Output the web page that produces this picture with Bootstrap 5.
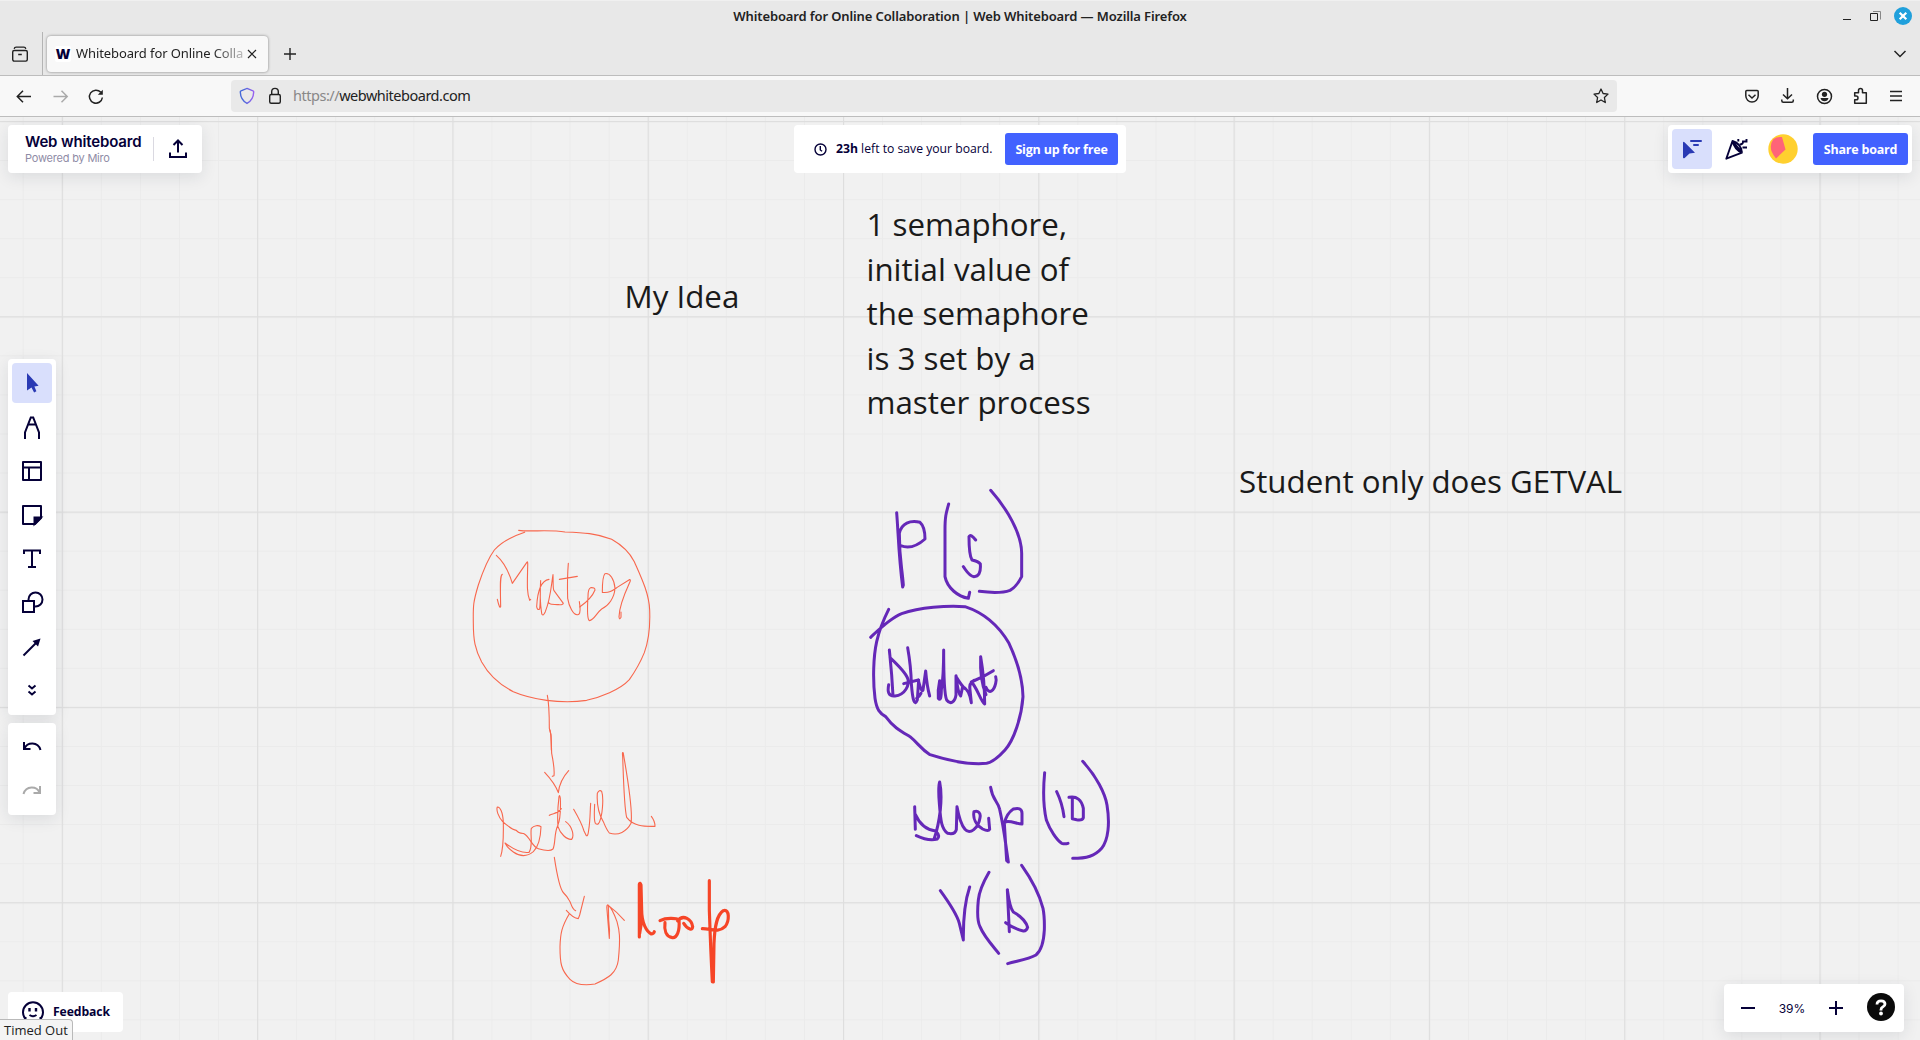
<!DOCTYPE html>
<html lang="en">
<head>
<meta charset="utf-8">
<title>Whiteboard for Online Collaboration | Web Whiteboard</title>
<link href="https://cdn.jsdelivr.net/npm/bootstrap@5.3.0/dist/css/bootstrap.min.css" rel="stylesheet">
<style>
body{width:1920px;height:1040px;overflow:hidden;background:#f1f1f1;font-family:"Open Sans","Noto Sans",sans-serif;color:#222}
svg{display:block;flex:none}
.ico{fill:none;stroke:currentColor}
.titlebar{height:32px;background:#e8e8e8;border-top:1px solid #f0f0f0}
.win-title{font-family:"Noto Sans",sans-serif;font-size:13px;font-weight:600;color:#222;white-space:nowrap;letter-spacing:-.12px}
.win-btns{right:7px;top:6px}
.tabstrip{height:44px;background:#e8e8e8;border-bottom:1px solid #bdbdbd}
.tabview{width:43px;height:43px;border-right:1px solid #b4b4b4;padding-left:12px}
.browser-tab{width:221px;height:36px;margin-left:4px;margin-top:1px;background:#f8f8f8;border-radius:4px;box-shadow:0 0 3px rgba(0,0,0,.45);padding-left:8px}
.favicon{width:16px;height:16px;background:#fff;border-radius:2px;color:#050038;font-weight:800;font-size:14px;line-height:16px}
.tab-title{font-family:"Noto Sans",sans-serif;width:170px;margin-left:5px;margin-right:1px;font-size:13px;letter-spacing:-.1px;white-space:nowrap;-webkit-mask-image:linear-gradient(90deg,#000 80%,rgba(0,0,0,.2));mask-image:linear-gradient(90deg,#000 80%,rgba(0,0,0,.2))}
.toolbar{height:41px;background:#f8f8f8;border-bottom:1px solid #bdbdbd}
.urlbar{width:1386px;height:32px;background:#e9e9e9;border-radius:4px;font-family:"Noto Sans",sans-serif;font-size:14.5px;letter-spacing:-.48px}
.board{height:923px;overflow:hidden}
.panel{background:#fff;border-radius:4px;box-shadow:0 4px 16px rgba(34,36,60,.1);color:#050038;z-index:2}
.tool{width:40px;height:40px;border-radius:4px}
.tool-on{background:#d9dffc;color:#2a3ab4}
.btn-miro{background:#4262ff;color:#fff;height:32px;border-radius:3px;font-size:12.5px;font-weight:700;padding:0;line-height:33px;border:0;letter-spacing:-.2px}
.p-brand{left:8px;top:8px;width:194px;height:48px}
.brand-name{font:600 15px/18px "Inter",sans-serif;letter-spacing:-.15px}
.brand-sub{font:400 11px/14px "Inter",sans-serif;color:#8f8ca6;letter-spacing:-.3px}
.brand-sub{letter-spacing:-.2px}
.p-save{left:794px;top:8px;width:332px;height:48px;font-size:12.2px;box-shadow:none}
.p-share{left:1668px;top:8px;width:244px;height:48px}
.p-share .btn-miro{letter-spacing:-.2px}
.p-tools{left:8px;top:242px;width:48px;height:356px;padding-top:4px;gap:4px}
.p-undo{left:8px;top:606px;width:48px;height:92px;padding:4px;gap:4px}
.p-feed{left:8px;top:875px;width:115px;height:40px;font-size:12.2px;font-weight:700;box-shadow:none;letter-spacing:-.1px}
.p-zoom{left:1724px;top:867px;width:180px;height:48px}
.zoomval{font:400 12px "Inter",sans-serif;width:60px}
.statustip{left:0;bottom:0;width:73px;height:21px;background:#f4f4f4;border:1px solid #b9b9b9;border-left:0;border-bottom:0;border-top-right-radius:4px;font-size:13px;line-height:20px;padding-left:4px;z-index:3;white-space:nowrap}
.note{font-family:"Open Sans","Noto Sans",sans-serif;font-size:31.3px;line-height:44.5px;color:#1a1a1a;white-space:nowrap}
.n1{left:624.500px;top:157px}.n2{left:866.500px;top:85px}.n3{left:1239px;top:342px}
</style>
<script src="https://cdn.jsdelivr.net/npm/bootstrap@5.3.0/dist/js/bootstrap.bundle.min.js"></script>
</head>
<body>
<header>
 <div class="titlebar position-relative d-flex justify-content-center align-items-center">
  <span class="win-title">Whiteboard for Online Collaboration | Web Whiteboard — Mozilla Firefox</span>
  <div class="win-btns position-absolute">
   <svg class="ico" width="72" height="20" stroke="#222"><path d="M2 12.500h8" /><path d="M32 4.500h7.500v8" stroke="#888"/><path d="M29.500 6.500h7v7h-7z"/><circle cx="62" cy="9" r="9" fill="#20a0dc" stroke="none"/><path d="M58.700 5.700l6.600 6.600m0-6.600l-6.600 6.600" stroke="#fff" stroke-width="2.200"/></svg>
  </div>
 </div>
 <div class="tabstrip d-flex align-items-center">
  <div class="tabview d-flex align-items-center">
   <svg class="ico" width="16" height="16" stroke-width="1.400"><rect x=".7" y="4.500" width="14.600" height="10.600" rx="1.500"/><path d="M2.200 2.800q.3-1.700 2-1.700h7.600q1.700 0 2 1.700M6.200 8.500h3.600"/></svg>
  </div>
  <div class="browser-tab d-flex align-items-center">
   <span class="favicon text-center">W</span>
   <span class="tab-title">Whiteboard for Online Colla</span>
   <svg class="ico" width="10" height="10" stroke-width="1.200"><path d="M1 1l8 8M9 1L1 9"/></svg>
  </div>
  <svg class="ico" style="margin-left:15.500px" width="12" height="12" stroke-width="1.400"><path d="M6 0v12M0 6h12"/></svg>
  <svg class="ico ms-auto" style="margin-right:13px" width="14" height="10" stroke-width="1.500"><path d="M1.500 2L7 7.500 12.500 2"/></svg>
 </div>
 <div class="toolbar d-flex align-items-center">
  <svg class="ico" width="231" height="40" stroke-width="1.500"><path d="M31 20.500H17.500M23 14.800l-5.700 5.700 5.700 5.700"/><path d="M53.500 20.500H67M61.500 14.800l5.700 5.700-5.700 5.700" stroke="#aaa"/><path d="M100.800 16.300a6.500 6.500 0 1 0 1.600 5.200"/><path d="M102.800 13.700v5h-5z" fill="#222" stroke="none"/></svg>
  <div class="urlbar d-flex align-items-center">
   <svg class="ico ms-2" width="54" height="20" stroke-width="1.400"><defs><linearGradient id="sh"><stop offset=".2" stop-color="#4468d8"/><stop offset="1" stop-color="#9860f0"/></linearGradient></defs><path stroke="url(#sh)" d="M8 2.400l6 2.400q.8.3.7 1.200C14.500 11.500 12.500 15 8 17.400 3.500 15 1.500 11.500 1.300 6q-.1-.9.700-1.200z"/><rect x="30.700" y="8.500" width="10.600" height="8.800" rx="1.500"/><path d="M32.700 8.500V5.700a3.300 3.300 0 0 1 6.600 0v2.800"/></svg>
   <span><span style="color:#888">https://</span>webwhiteboard.com</span>
   <svg class="ico ms-auto me-2" width="16" height="16" stroke-width="1.300"><path stroke-linejoin="round" d="M8 1l2.100 4.500 4.900.6-3.600 3.400.9 5L8 12l-4.300 2.500.9-5L1 6.100l4.900-.6z"/></svg>
  </div>
  <svg class="ico" width="303" height="40" stroke-width="1.500"><g transform="translate(-1617,-76)"><path d="M1745.800 91.500q0-1 1-1h10.400q1 0 1 1v4.300a6.200 6.200 0 0 1-12.400 0z"/><path d="M1748.500 94.800l3.500 3.200 3.500-3.200"/><path d="M1787.500 88v10.500M1783 94.500l4.500 4.300 4.500-4.300M1781.800 99.500v1.200q0 1.500 1.500 1.500h8.500q1.500 0 1.500-1.500v-1.200"/><circle cx="1824.500" cy="96.500" r="7"/><circle cx="1824.500" cy="94.300" r="2.600" fill="#222" stroke="none"/><path d="M1820.500 98h8q-.8 3.200-4 3.200t-4-3.200z" fill="#222" stroke="none"/><path stroke-linejoin="round" d="M1854.700 92.800h3.800v-2.300a2 2 0 0 1 4 0v2.300h3.800v10.500h-11.600v-3.600h1.500a1.800 1.800 0 0 0 0-3.600h-1.500z"/><path d="M1890 91.500h12M1890 96h12M1890 100.500h12"/></g></svg>
 </div>
</header>
<main class="board position-relative">
 <svg class="position-absolute top-0 start-0" width="1920" height="923" viewBox="0 117 1920 923">
  <defs>
   <pattern id="minor" x="61.800" y="121" width="39.060" height="39.060" patternUnits="userSpaceOnUse"><path d="M.5 0V39.060M0 .5H39.060" stroke="#ebebeb" stroke-width="1"/></pattern>
   <pattern id="major" x="61.800" y="121" width="195.300" height="195.300" patternUnits="userSpaceOnUse"><path d="M.6 0V195.300M0 .6H195.300" stroke="#dedede" stroke-width="1.200"/></pattern>
  </defs>
  <rect y="117" width="1920" height="923" fill="url(#minor)"/>
  <rect y="117" width="1920" height="923" fill="url(#major)"/>
  <g fill="none" stroke-linecap="round" stroke-linejoin="round">
   <g stroke="#f8674d" stroke-width="3.300">
    <g transform="translate(450 510) scale(.33333)">
     <path d="M206 61C240 66 300 58 345 66C400 68 440 70 485 88C515 105 540 130 553 155C575 205 597 250 599 300C601 350 597 390 583 428C570 460 555 485 538 509C510 540 450 562 410 571C370 577 320 575 290 571C250 565 220 558 190 545C150 525 115 492 95 456C75 418 70 390 70 340C69 285 70 275 85 225C100 180 113 147 133 120C155 95 185 80 224 67"/>
     <path d="M157 193C149 197 151 230 152 290Q149 298 142 268M139 136C155 150 175 180 187 220L230 158Q234 150 233 170C232 220 230 250 239 271L242 268"/>
     <path d="M297 208C272 212 262 250 260 290Q262 302 269 297C272 275 270 240 272 212C270 240 272 290 275 310Q278 322 286 305C302 265 303 230 309 194C310 215 308 235 312 242L340 280Q340 285 325 284C305 283 295 283 295 275M355 160C352 195 352 230 353 265C357 290 370 315 382 314Q392 316 390 290L388 275M328 208L382 199"/>
     <path d="M389 291C405 280 425 265 435 240Q435 232 422 233Q414 235 414 260C412 290 410 325 418 332C433 330 438 310 455 297C475 288 493 265 495 235C493 208 480 188 465 191C457 198 457 220 457 247C480 250 490 240 505 230L538 209Q544 208 538 220C522 255 508 290 507 320Q508 332 513 322V306"/>
     <path d="M292 556C297 580 298 620 298 655L303 675L304 720"/>
    </g>
    <g transform="translate(480 730) scale(.33333)">
     <path d="M210 0C215 20 214 50 215 70C220 95 224 120 222 137L217 139M194 127C210 144 225 160 235 188C237 170 245 145 266 122"/>
     <path d="M62 379C72 350 70 310 70 275C68 245 60 230 52 231C48 240 55 260 68 275C85 290 100 300 109 301C115 310 125 310 132 311C150 320 155 350 175 356C195 362 210 365 219 357C227 340 222 310 233 287C243 265 242 230 241 205Q239 192 237 200C234 225 232 265 234 290C240 310 260 330 275 328C283 318 278 290 257 275M208 256C220 248 230 255 244 236"/>
     <path d="M75 339C100 358 125 370 147 367C160 350 150 310 154 295C162 286 175 285 183 290C182 320 175 350 160 365C142 380 120 380 100 366C87 357 80 350 75 339M281 238C295 262 305 280 312 303L319 317Q324 320 326 300C331 270 330 245 332 220M344 223C343 245 341 270 346 280Q356 290 362 265C368 245 371 200 365 184Q358 178 352 190C350 220 355 250 370 275Q380 300 388 309C415 318 440 305 453 280C460 240 440 130 430 70Q426 62 428 80C430 130 432 230 440 262C460 288 490 290 525 289Q525 273 514 259"/>
     <path d="M223 382Q237 475 251 489Q262 500 267 510C275 520 273 535 287 542M259 541Q280 565 295 566L299 555L313 499M268 551C245 590 241 610 240 650C240 700 243 720 270 748C290 768 325 765 345 762C385 744 410 730 415 690C422 620 418 600 411 575Q397 535 384 525Q379 523 381 540L388 625Q390 600 386 570L385 526Q410 545 433 571"/>
    </g>
   </g>
   <g transform="translate(480 730) scale(.33333)" stroke="#f64527" stroke-width="9.500">
    <path d="M478 621V463Q480 456 483 465L485 540C485 580 500 605 514 612Q521 612 523 605M486 560Q483 590 479 610M540 572C560 562 590 565 597 570C600 605 590 625 577 623C558 620 552 600 555 578M593 573C610 550 635 570 638 590Q637 600 630 597Q618 593 611 580M688 452V540Q692 660 697 755L700 756L702 640C704 590 710 555 730 542C750 535 748 575 735 590C715 610 690 595 667 596"/>
   </g>
   <g stroke="#6528b8" stroke-width="9">
    <g transform="translate(850 480) scale(.33333)">
     <path d="M140 98C145 160 146 230 158 321L160 315C156 260 148 240 148 160C155 130 180 120 210 127Q225 140 225 177C205 195 180 208 152 197M296 72C288 100 285 110 285 150V290C292 325 325 350 355 355L359 337M422 31C470 85 515 160 515 220V290Q500 320 480 331Q450 342 388 334M377 180Q362 160 357 170C357 200 360 230 366 240Q385 244 391 252C393 280 385 290 372 290C355 287 348 270 340 260"/>
     <path d="M62 472C80 455 120 415 155 401C210 382 290 376 345 380C400 398 445 435 477 490C505 550 518 605 519 650C515 710 492 780 465 810C445 832 425 847 410 850C360 855 290 840 240 824C210 805 205 790 180 770C155 755 130 742 107 710C90 700 80 690 75 655C68 600 70 530 80 485C90 440 105 410 116 388"/>
     <path d="M118 510C121 540 125 570 129 647M120 533Q165 575 173 595C180 615 165 645 135 648C115 650 112 635 116 614M173 503Q183 560 184 610Q190 690 202 660L206 600M161 611L205 600Q215 640 219 630L227 573Q231 620 239 648M213 640Q208 650 200 655M269 602Q263 630 265 655Q274 667 274 630Q281 590 281 510Q281 640 290 660C302 676 315 665 318 645V587Q324 640 332 648L338 620Q358 628 364 668L360 630Q356 610 372 601M318 590Q336 619 345 626M364 606C380 620 393 665 404 672Q404 600 392 530Q389 600 408 644M364 606Q402 590 430 572M437 590Q440 600 437 610C432 632 418 645 408 622"/>
    </g>
    <g transform="translate(890 750) scale(.33333)">
     <path d="M74 170L76 238M76 193C90 225 115 240 137 243Q152 258 142 267C125 272 100 267 79 257M133 265Q145 230 151 180C155 140 153 115 149 96Q144 110 148 160C152 215 155 237 173 250Q195 255 199 239L201 170Q210 220 225 238C240 255 265 235 270 203C273 190 265 180 252 185M252 185C248 205 258 225 278 237Q295 245 299 238L296 205M302 112C307 150 325 155 329 178C342 235 345 270 355 336L350 332L343 220Q350 190 370 177C385 173 396 175 396 190V222C380 222 360 210 345 216"/>
     <path d="M464 68C458 130 460 170 469 210C480 240 500 270 515 280Q525 283 534 280M578 34C620 80 645 130 651 165C660 220 655 270 635 295C615 318 590 325 548 325M500 125Q517 160 522 200M537 142C560 137 575 150 580 175V203Q577 212 560 209L547 206V146"/>
     <path d="M151 422C175 455 200 490 208 520L220 570Q219 470 239 411M297 367C275 405 267 430 265 450C260 500 265 520 270 530C282 560 310 590 326 610M395 346C430 395 450 440 459 475Q464 500 463 540C461 580 450 605 438 615C415 628 385 632 353 641M358 545L352 419Q360 475 370 486C395 500 408 515 413 532Q409 544 400 543Q375 538 347 518"/>
    </g>
   </g>
  </g>
 </svg>
 <div class="note n1 position-absolute">My Idea</div>
 <div class="note n2 position-absolute">1 semaphore,<br>initial value of<br>the semaphore<br>is 3 set by a<br>master process</div>
 <div class="note n3 position-absolute">Student only does GETVAL</div>

 <div class="panel p-brand position-absolute d-flex align-items-center">
  <div style="width:128px;margin-left:17px"><div class="brand-name">Web whiteboard</div><div class="brand-sub">Powered by Miro</div></div>
  <div class="vr" style="height:24px;align-self:center;opacity:.15"></div>
  <svg class="ico" style="margin-left:15px" width="18" height="20" stroke-width="2"><path d="M1 13.500V18h16v-4.500M9 13.500V2M4.500 6L9 1.500 13.500 6"/></svg>
 </div>
 <div class="panel p-save position-absolute d-flex align-items-center">
  <svg class="ico" style="margin-left:20px;margin-right:9px" width="13" height="13" stroke-width="1.400"><circle cx="6.500" cy="6.500" r="5.500"/><path d="M6.300 3v4l1.800 1.300"/></svg>
  <span><b>23h</b> left to save your board.</span>
  <button class="btn btn-miro ms-auto me-2" style="width:113px">Sign up for free</button>
 </div>
 <div class="panel p-share position-absolute d-flex align-items-center">
  <div class="tool tool-on ms-1"><svg width="40" height="40" fill="currentColor"><path d="M11 14q0-2 1.500-.7L23 23.700l-5.500.8-4.800 4.400q-1.700 1-1.700-.7z"/><path d="M19 12h10M22 16h4" stroke="currentColor" stroke-width="2" stroke-linecap="round"/></svg></div>
  <svg class="ico" style="margin-left:8px" width="32" height="40" stroke-width="1.900"><path stroke-linejoin="round" d="M12.500 12L6.300 29.700 22 23.700zM12.500 12q2 8.500 9.500 11.700M12.500 12q8.500 2.500 9.500 11.700"/><path d="M20.500 14.500q2.500 1.500 2.500-2h3.500V10M18.300 12.500v-2.500M22.500 18.500H27M20.500 14.500v2"/></svg>
  <svg style="margin-left:16px" width="30" height="30"><circle cx="15" cy="15" r="14.700" fill="#ffd02f"/><path d="M14 3L17.500 15.500 8 24.500Q-1 14 5.500 5 9 2.500 14 3z" fill="#ff6478"/></svg>
  <button class="btn btn-miro ms-auto me-1" style="width:95px">Share board</button>
 </div>
 <div class="panel p-tools position-absolute d-flex flex-column align-items-center">
  <div class="tool tool-on"><svg width="40" height="40" fill="currentColor"><path d="M15 10v17.500l4.500-3 2.600 5 2.300-1.300-2-4.800 4.200-.7z"/></svg></div>
  <svg class="ico tool" stroke-width="2"><path d="M13 32v-6.500L18.800 10.500h2.400L27 25.500V32M16 17.500h8"/></svg>
  <svg class="ico tool" stroke-width="2"><path stroke-linejoin="round" d="M11 11h18v18H11zM11 16.500h18M17 16.500V29"/></svg>
  <svg class="ico tool" stroke-width="2"><path stroke-linejoin="round" d="M29 11v12l-6 6H11V11z"/><path d="M29 22.500h-6.500V29z" fill="currentColor"/></svg>
  <svg class="ico tool" stroke-width="2"><path d="M12 15v-3.500h16V15M20 11.500v17M16 28h8"/></svg>
  <svg class="ico tool" stroke-width="2"><circle cx="23.500" cy="16.500" r="7"/><path fill="#fff" d="M11 18h11v11H11z"/></svg>
  <svg class="ico tool" stroke-width="2"><path d="M11.500 28.500L26 14"/><path d="M28.500 11.500L20.500 14l5.500 5.500z" fill="currentColor" stroke="none"/></svg>
  <svg class="ico tool" stroke-width="2"><path d="M16.500 14.500l3.500 3 3.500-3M16.500 20.500l3.500 3 3.500-3"/></svg>
 </div>
 <div class="panel p-undo position-absolute d-flex flex-column">
  <svg class="ico tool" stroke-width="2"><path d="M12 15v7h6.500M12.500 21.500C15 15 26 14 28.500 23"/></svg>
  <svg class="ico tool" stroke-width="2" style="color:#aaa"><path d="M28 15v7h-6.500M27.500 21.500C25 15 14 14 11.500 23"/></svg>
 </div>
 <div class="panel p-feed position-absolute d-flex align-items-center">
  <svg class="ico" style="margin-left:13px;margin-right:8px" width="24" height="24" stroke-width="2"><path d="M5 19.500A10 10 0 1 1 19 19.500M4.500 17v5h15v-5M8.500 15q3.500 2.500 7 0"/><path d="M8.500 8v3.500M15 8v3.500" stroke-width="2.400"/></svg>
  <span>Feedback</span>
 </div>
 <div class="panel p-zoom position-absolute d-flex align-items-center">
  <svg class="ico" style="margin-left:17px" width="14" height="14" stroke-width="2"><path d="M0 7h14"/></svg>
  <span class="zoomval text-center" style="margin:0 7px">39%</span>
  <svg class="ico" width="14" height="14" stroke-width="2"><path d="M0 7h14M7 0v14"/></svg>
  <svg style="margin-left:24px;margin-top:-2px" width="28" height="28"><circle cx="14" cy="14" r="14" fill="#0a0a0a"/><path d="M10 11.500q0-3.700 4-3.700t4 3.300q0 1.700-2 2.700-2 .9-2 2.900v.8" stroke="#fff" stroke-width="2.800" fill="none"/><circle cx="14" cy="20.500" r="1.900" fill="#fff"/></svg>
 </div>
 <div class="statustip position-absolute">Timed Out</div>
</main>
</body>
</html>
